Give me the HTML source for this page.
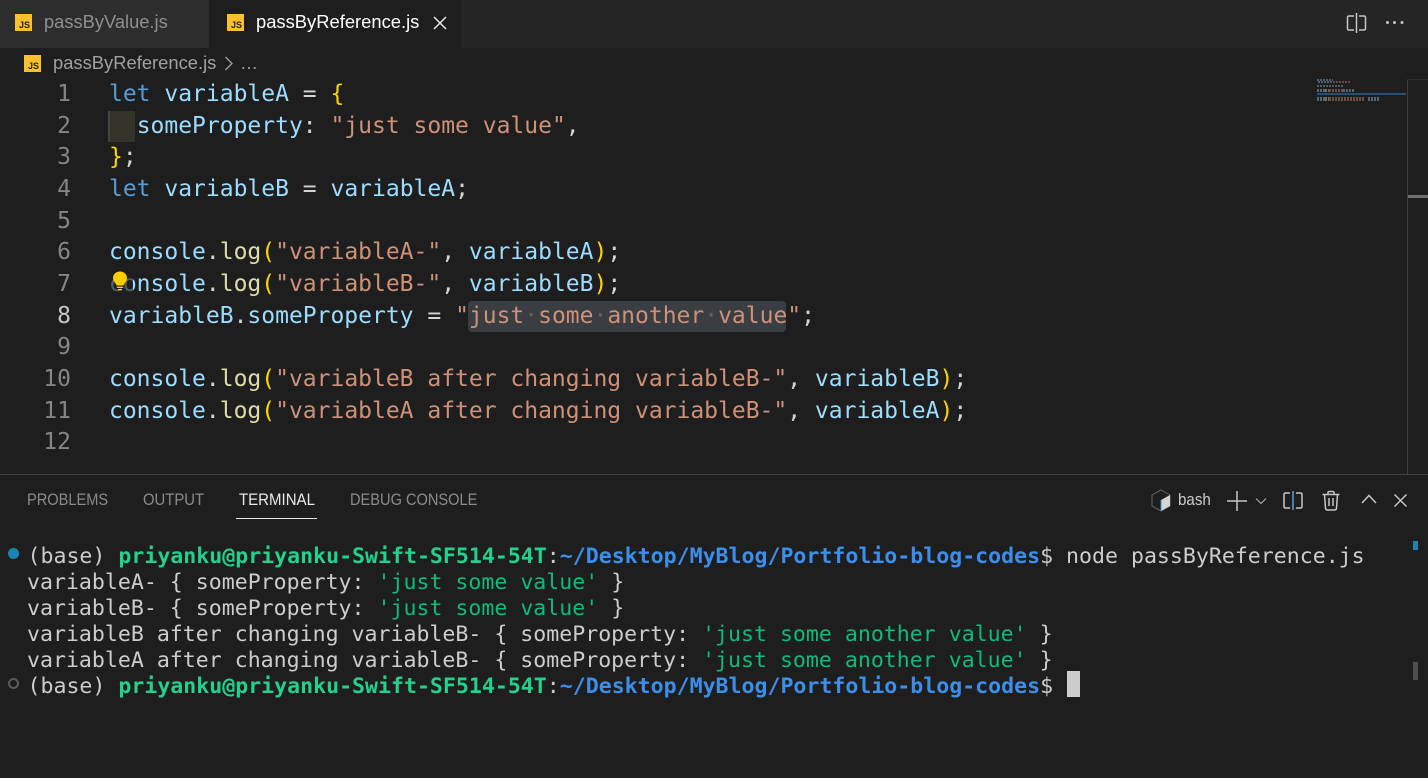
<!DOCTYPE html>
<html><head><meta charset="utf-8">
<style>
html,body{margin:0;padding:0;background:#1e1e1e;width:1428px;height:778px;overflow:hidden}
.a{position:absolute}
.ui{font-family:"Liberation Sans",sans-serif;white-space:pre}
.sx{transform-origin:0 50%}
.ed,.ln{font-family:"DejaVu Sans Mono",monospace;font-size:23px;line-height:32px;white-space:pre;position:absolute}
.ln{width:71px;left:0;text-align:right;color:#858585}
.ed{left:109px;color:#d4d4d4;letter-spacing:-.006px}
.k{color:#569cd6}.v{color:#9cdcfe}.f{color:#dcdcaa}.s{color:#ce9178}.b{color:#ffd700}.c{color:#4fc1ff}
.t{position:absolute;left:27px;font-family:"DejaVu Sans Mono",monospace;font-size:21.57px;line-height:26px;white-space:pre;color:#cccccc}
.g{color:#23d18b;font-weight:bold}.bl{color:#3b8eea;font-weight:bold}.gr{color:#0dbc79}
.js{position:absolute;width:17px;height:17px;background:#fbc02d;color:#222;font:bold 9px "Liberation Sans",sans-serif;text-align:right;line-height:22px;overflow:hidden}
.js span{display:block;margin-right:2px;height:17px;line-height:22px}
.mm{position:absolute;opacity:.75;background-image:repeating-linear-gradient(90deg,var(--c) 0 2px,rgba(30,30,30,.45) 2px 3px)}
svg{position:absolute;overflow:visible}
</style></head><body>
<!-- tab bar -->
<div class="a" style="left:0;top:0;width:1428px;height:48px;background:#252526"></div>
<div class="a" style="left:0;top:0;width:209px;height:48px;background:#2d2d2d"></div>
<div class="a" style="left:209px;top:0;width:252px;height:48px;background:#1e1e1e"></div>
<div class="js" style="left:15px;top:14px"><span>JS</span></div>
<div class="a ui sx" style="left:44px;top:11px;font-size:18.6px;line-height:22px;color:#8f8f8f;transform:scaleX(.984)">passByValue.js</div>
<div class="js" style="left:227px;top:14px"><span>JS</span></div>
<div class="a ui sx" style="left:256px;top:11px;font-size:18.6px;line-height:22px;color:#ffffff;transform:scaleX(.988)">passByReference.js</div>
<svg style="left:433px;top:16px" width="14" height="14" viewBox="0 0 14 14"><path d="M1 1L13 13M13 1L1 13" stroke="#e8e8e8" stroke-width="1.5" fill="none"/></svg>
<svg style="left:1346px;top:12px" width="22" height="22" viewBox="0 0 22 22"><path d="M8 4H3Q1.500 4 1.500 5.500V16.500Q1.500 18 3 18H8M13 4H18Q19.500 4 19.500 5.500V16.500Q19.500 18 18 18H13" stroke="#c5c5c5" stroke-width="1.500" fill="none"/><path d="M10.500 1V21" stroke="#c5c5c5" stroke-width="1.500" fill="none"/></svg>
<div class="a" style="left:1386px;top:21px;width:3px;height:3px;border-radius:50%;background:#c5c5c5;box-shadow:7px 0 #c5c5c5,14.500px 0 #c5c5c5"></div>
<!-- breadcrumb -->
<div class="js" style="left:24px;top:55px"><span>JS</span></div>
<div class="a ui sx" style="left:53px;top:52px;font-size:18.6px;line-height:22px;color:#a0a0a0;transform:scaleX(.988)">passByReference.js</div>
<svg style="left:224px;top:56px" width="10" height="15" viewBox="0 0 10 15"><path d="M1.500 1L8 7.500L1.500 14" stroke="#a0a0a0" stroke-width="1.300" fill="none"/></svg>
<div class="a ui" style="left:240px;top:52px;font-size:18px;line-height:22px;color:#a0a0a0">…</div>
<!-- indent highlight -->
<div class="a" style="left:108px;top:111px;width:27px;height:31px;background:#33332a;border-left:2px solid #45453a;box-sizing:border-box"></div>
<!-- selection -->
<div class="a" style="left:468px;top:301px;width:318px;height:31px;background:#3a3d41;border-radius:4px"></div>
<!-- line numbers -->
<div class="ln" style="top:78px">1</div>
<div class="ln" style="top:110px">2</div>
<div class="ln" style="top:141px">3</div>
<div class="ln" style="top:173px">4</div>
<div class="ln" style="top:205px">5</div>
<div class="ln" style="top:236px">6</div>
<div class="ln" style="top:268px">7</div>
<div class="ln" style="top:300px;color:#c6c6c6">8</div>
<div class="ln" style="top:331px">9</div>
<div class="ln" style="top:363px">10</div>
<div class="ln" style="top:395px">11</div>
<div class="ln" style="top:426px">12</div>
<!-- code -->
<div class="ed" style="top:78px"><span class="k">let</span> <span class="v">variableA</span> = <span class="b">{</span></div>
<div class="ed" style="top:110px">  <span class="v">someProperty</span>: <span class="s">"just some value"</span>,</div>
<div class="ed" style="top:141px"><span class="b">}</span>;</div>
<div class="ed" style="top:173px"><span class="k">let</span> <span class="v">variableB</span> = <span class="v">variableA</span>;</div>
<div class="ed" style="top:236px"><span class="v">console</span>.<span class="f">log</span><span class="b">(</span><span class="s">"variableA-"</span>, <span class="v">variableA</span><span class="b">)</span>;</div>
<div class="ed" style="top:268px"><span class="v">console</span>.<span class="f">log</span><span class="b">(</span><span class="s">"variableB-"</span>, <span class="v">variableB</span><span class="b">)</span>;</div>
<div class="ed" style="top:300px"><span class="v">variableB</span>.<span class="v">someProperty</span> = <span class="s">"just<span style="color:#5f6262">·</span>some<span style="color:#5f6262">·</span>another<span style="color:#5f6262">·</span>value"</span>;</div>
<div class="ed" style="top:363px"><span class="v">console</span>.<span class="f">log</span><span class="b">(</span><span class="s">"variableB after changing variableB-"</span>, <span class="v">variableB</span><span class="b">)</span>;</div>
<div class="ed" style="top:395px"><span class="v">console</span>.<span class="f">log</span><span class="b">(</span><span class="s">"variableA after changing variableB-"</span>, <span class="v">variableA</span><span class="b">)</span>;</div>
<!-- lightbulb -->
<div class="a" style="left:109px;top:272px;width:24px;height:24px;background:#1e1e1e;opacity:.65"></div>
<svg style="left:112px;top:271px" width="16" height="20" viewBox="0 0 16 20"><path d="M8 0.500C3.800 0.500 1 3.500 1 7C1 9.500 2.300 11 3.500 12.500C4 13 4.500 14 4.500 14.500H11.500C11.500 14 12 13 12.500 12.500C13.700 11 15 9.500 15 7C15 3.500 12.200 0.500 8 0.500Z" fill="#ffcc00"/><path d="M4.800 15.600H11.200V17H4.800ZM6 18H10V19.200H6Z" fill="#ffcc00"/></svg>
<!-- minimap -->
<div class="mm" style="--c:#5b7180;left:1317px;top:79px;width:16px;height:2px"></div>
<div class="mm" style="--c:#5e7b8c;left:1318px;top:81px;width:14px;height:2px"></div>
<div class="mm" style="--c:#7d5a4d;left:1333px;top:81px;width:18px;height:2px"></div>
<div class="mm" style="--c:#5b7180;left:1317px;top:85px;width:26px;height:2px"></div>
<div class="mm" style="--c:#5f7f90;left:1317px;top:89px;width:8px;height:3px"></div>
<div class="mm" style="--c:#8a8a6a;left:1325px;top:89px;width:4px;height:3px"></div>
<div class="mm" style="--c:#80614f;left:1329px;top:89px;width:14px;height:3px"></div>
<div class="mm" style="--c:#5f7f90;left:1343px;top:89px;width:11px;height:3px"></div>
<div class="a" style="left:1317px;top:93px;width:89px;height:2px;background:#264f78"></div>
<div class="mm" style="--c:#5f7f90;left:1317px;top:97px;width:8px;height:4px"></div>
<div class="mm" style="--c:#8a8a6a;left:1325px;top:97px;width:4px;height:4px"></div>
<div class="mm" style="--c:#80614f;left:1329px;top:97px;width:36px;height:4px"></div>
<div class="mm" style="--c:#5f7f90;left:1368px;top:97px;width:11px;height:4px"></div>
<!-- scrollbar rule -->
<div class="a" style="left:1407px;top:79px;width:1px;height:396px;background:#3c3c3c"></div>
<div class="a" style="left:1407px;top:79px;width:21px;height:1px;background:#2f2f2f"></div>
<div class="a" style="left:1408px;top:195px;width:20px;height:3px;background:#6e6e6e"></div>
<!-- panel -->
<div class="a" style="left:0;top:474px;width:1428px;height:1px;background:#414141"></div>
<div class="a ui sx" style="left:27px;top:490px;font-size:16.5px;line-height:20px;color:#8b8b8b;transform:scaleX(.885)">PROBLEMS</div>
<div class="a ui sx" style="left:143px;top:490px;font-size:16.5px;line-height:20px;color:#8b8b8b;transform:scaleX(.9)">OUTPUT</div>
<div class="a ui sx" style="left:239px;top:490px;font-size:16.5px;line-height:20px;color:#e7e7e7;transform:scaleX(.91)">TERMINAL</div>
<div class="a ui sx" style="left:350px;top:490px;font-size:16.5px;line-height:20px;color:#8b8b8b;transform:scaleX(.885)">DEBUG CONSOLE</div>
<div class="a" style="left:236px;top:518px;width:81px;height:1px;background:#e7e7e7"></div>
<!-- panel icons -->
<svg style="left:1151px;top:489px" width="20" height="23" viewBox="0 0 20 23"><path d="M10 1L19 6V17L10 22L1 17V6Z" fill="none" stroke="#666" stroke-width="1"/><path d="M10 11L19 6V17L10 22Z" fill="#d5d5d5"/><path d="M10 11V22" stroke="#3b8eea" stroke-width="1"/></svg>
<div class="a ui sx" style="left:1178px;top:490px;font-size:17px;line-height:20px;color:#cccccc;transform:scaleX(.89)">bash</div>
<svg style="left:1227px;top:491px" width="20" height="20" viewBox="0 0 20 20"><path d="M0 10H20M10 0V20" stroke="#c5c5c5" stroke-width="1.500" fill="none"/></svg>
<svg style="left:1255px;top:497px" width="12" height="8" viewBox="0 0 12 8"><path d="M1 1.500L6 6.500L11 1.500" stroke="#a5a5a5" stroke-width="1.200" fill="none"/></svg>
<svg style="left:1283px;top:490px" width="20" height="21" viewBox="0 0 20 21"><path d="M7 3H2.500Q1 3 1 4.500V16.500Q1 18 2.500 18H7M13 3H17.500Q19 3 19 4.500V16.500Q19 18 17.500 18H13" stroke="#c5c5c5" stroke-width="1.500" fill="none"/><path d="M10 1V20" stroke="#5a9fd4" stroke-width="1.500" fill="none"/></svg>
<svg style="left:1322px;top:490px" width="18" height="21" viewBox="0 0 18 21"><path d="M0.500 4.500H17.500M6 4V2.500Q6 1.500 7 1.500H11Q12 1.500 12 2.500V4M2.500 4.500L3.500 18Q3.700 20 5.500 20H12.500Q14.300 20 14.500 18L15.500 4.500M7 8V16M11 8V16" stroke="#c5c5c5" stroke-width="1.500" fill="none"/></svg>
<svg style="left:1361px;top:494px" width="16" height="10" viewBox="0 0 16 10"><path d="M1 9L8 1.500L15 9" stroke="#c5c5c5" stroke-width="1.500" fill="none"/></svg>
<svg style="left:1394px;top:494px" width="13" height="13" viewBox="0 0 13 13"><path d="M0.500 0.500L12.500 12.500M12.500 0.500L0.500 12.500" stroke="#c5c5c5" stroke-width="1.500" fill="none"/></svg>
<!-- terminal -->
<div class="a" style="left:8px;top:548px;width:11px;height:11px;border-radius:50%;background:#1a85b4"></div>
<div class="t" style="top:544px;left:27.500px">(base) <span class="g">priyanku@priyanku-Swift-SF514-54T</span>:<span class="bl">~/Desktop/MyBlog/Portfolio-blog-codes</span>$ node passByReference.js</div>
<div class="t" style="top:570px">variableA- { someProperty: <span class="gr">'just some value'</span> }</div>
<div class="t" style="top:596px">variableB- { someProperty: <span class="gr">'just some value'</span> }</div>
<div class="t" style="top:622px">variableB after changing variableB- { someProperty: <span class="gr">'just some another value'</span> }</div>
<div class="t" style="top:648px">variableA after changing variableB- { someProperty: <span class="gr">'just some another value'</span> }</div>
<div class="a" style="left:8px;top:678px;width:11px;height:11px;border-radius:50%;border:2px solid #5a5a5a;box-sizing:border-box"></div>
<div class="t" style="top:674px;left:27.500px">(base) <span class="g">priyanku@priyanku-Swift-SF514-54T</span>:<span class="bl">~/Desktop/MyBlog/Portfolio-blog-codes</span>$</div>
<div class="a" style="left:1067px;top:671px;width:13px;height:26px;background:#cccccc"></div>
<div class="a" style="left:1413px;top:541px;width:5px;height:9px;background:#1a85b4"></div>
<div class="a" style="left:1413px;top:662px;width:5px;height:18px;background:#4f4f4f"></div>
</body></html>
